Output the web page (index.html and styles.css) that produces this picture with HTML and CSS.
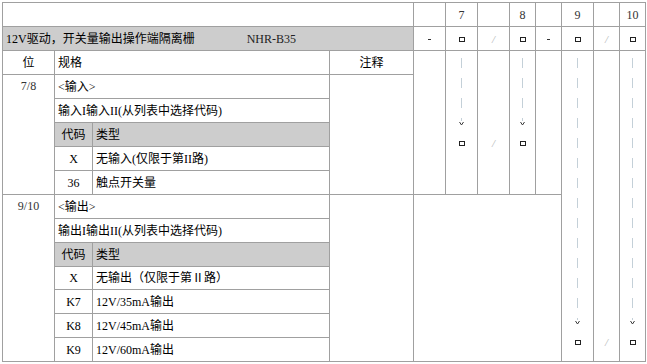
FILE: index.html
```html
<!DOCTYPE html>
<html lang="zh">
<head>
<meta charset="utf-8">
<title>NHR-B35</title>
<link rel="stylesheet" href="styles.css">
</head>
<body>
<table class="spec">
  <colgroup>
    <col class="w52"><col class="w38"><col class="w237"><col class="w84">
    <col class="w32"><col class="w32"><col class="w32"><col class="w26">
    <col class="w26"><col class="w32"><col class="w26"><col class="w26">
  </colgroup>
  <tr>
    <td colspan="4"></td>
    <td></td><td class="c num">7</td><td></td><td class="c num">8</td>
    <td></td><td class="c num">9</td><td></td><td class="c num">10</td>
  </tr>
  <tr>
    <td colspan="4" class="gray title"><span>12V驱动，开关量输出操作端隔离栅</span><span class="model">NHR-B35</span></td>
    <td class="c"><span class="minus"></span></td>
    <td class="c"><span class="box"></span></td>
    <td class="c slash">/</td>
    <td class="c"><span class="box"></span></td>
    <td class="c"><span class="minus"></span></td>
    <td class="c"><span class="box"></span></td>
    <td class="c slash">/</td>
    <td class="c"><span class="box"></span></td>
  </tr>
  <tr>
    <td class="c">位</td>
    <td colspan="2">规格</td>
    <td class="c">注释</td>
    <td rowspan="6"></td>
    <td rowspan="6" class="flow-cell">
      <div class="flow"><div class="dash dash-short"></div><svg class="arrow" width="5" height="5" viewBox="0 0 5 5"><path d="M0.5 1 L2.5 4 L4.5 1" fill="none" stroke="#3a3a3a" stroke-width="1"/></svg><span class="box box-flow-short"></span></div>
    </td>
    <td rowspan="6" class="c slash slash-short">/</td>
    <td rowspan="6" class="flow-cell">
      <div class="flow"><div class="dash dash-short"></div><svg class="arrow" width="5" height="5" viewBox="0 0 5 5"><path d="M0.5 1 L2.5 4 L4.5 1" fill="none" stroke="#3a3a3a" stroke-width="1"/></svg><span class="box box-flow-short"></span></div>
    </td>
    <td rowspan="6"></td>
    <td rowspan="13" class="flow-cell">
      <div class="flow"><div class="dash dash-long"></div><svg class="arrow" width="5" height="5" viewBox="0 0 5 5"><path d="M0.5 1 L2.5 4 L4.5 1" fill="none" stroke="#3a3a3a" stroke-width="1"/></svg><span class="box box-flow-long"></span></div>
    </td>
    <td rowspan="13" class="c slash slash-long">/</td>
    <td rowspan="13" class="flow-cell">
      <div class="flow"><div class="dash dash-long"></div><svg class="arrow" width="5" height="5" viewBox="0 0 5 5"><path d="M0.5 1 L2.5 4 L4.5 1" fill="none" stroke="#3a3a3a" stroke-width="1"/></svg><span class="box box-flow-long"></span></div>
    </td>
  </tr>
  <tr>
    <td rowspan="5" class="c top num">7/8</td>
    <td colspan="2">&lt;输入&gt;</td>
    <td rowspan="5"></td>
  </tr>
  <tr><td colspan="2">输入I输入II(从列表中选择代码)</td></tr>
  <tr><td class="c gray">代码</td><td class="gray">类型</td></tr>
  <tr><td class="c">X</td><td>无输入(仅限于第II路)</td></tr>
  <tr><td class="c">36</td><td>触点开关量</td></tr>
  <tr>
    <td rowspan="7" class="c top num">9/10</td>
    <td colspan="2">&lt;输出&gt;</td>
    <td rowspan="7"></td>
    <td rowspan="7" colspan="5"></td>
  </tr>
  <tr><td colspan="2">输出I输出II(从列表中选择代码)</td></tr>
  <tr><td class="c gray">代码</td><td class="gray">类型</td></tr>
  <tr class="short"><td class="c">X</td><td>无输出（仅限于第Ⅱ路）</td></tr>
  <tr><td class="c">K7</td><td>12V/35mA输出</td></tr>
  <tr><td class="c">K8</td><td>12V/45mA输出</td></tr>
  <tr><td class="c">K9</td><td>12V/60mA输出</td></tr>
</table>
</body>
</html>
```

FILE: styles.css
```css
html, body {
  margin: 0;
  padding: 0;
  background: #ffffff;
}

body {
  padding: 2px 0 0 2px;
}

.spec {
  border-collapse: collapse;
  table-layout: fixed;
  width: 644px;
  font-family: "Liberation Serif", "Noto Sans CJK SC", serif;
  font-size: 12px;
  line-height: 14px;
  color: #000;
}

.w52 { width: 52px; }
.w38 { width: 38px; }
.w237 { width: 237px; }
.w84 { width: 84px; }
.w32 { width: 32px; }
.w26 { width: 26px; }

.spec td {
  border: 1px solid #a0a0a0;
  height: 23px;
  padding: 0 3px;
  white-space: nowrap;
  overflow: hidden;
}

.spec tr.short td {
  height: 22px;
}

.c {
  text-align: center;
}

.gray {
  background: #cdcdcd;
}

.num {
  color: #333;
}

.top {
  vertical-align: top;
  padding-top: 4px !important;
}

.title .model {
  margin-left: 52px;
  color: #222;
}

.minus {
  display: inline-block;
  width: 3px;
  height: 1px;
  background: #333;
  vertical-align: middle;
}

.box {
  display: inline-block;
  width: 6px;
  height: 5px;
  border: 1px solid #222;
  box-sizing: border-box;
  vertical-align: middle;
}

.slash {
  color: #b4b4b4;
  font-size: 11px;
  font-style: italic;
}

.slash-short {
  vertical-align: top;
  padding-top: 85px !important;
}

.slash-long {
  vertical-align: top;
  padding-top: 284px !important;
}

.flow-cell {
  vertical-align: top;
  padding: 7px 0 0 !important;
}

.flow {
  display: flex;
  flex-direction: column;
  align-items: center;
}

.dash {
  width: 1px;
  background: repeating-linear-gradient(to bottom, #c4d0d8 0 10px, transparent 10px 20px);
}

.dash-short {
  height: 63px;
}

.dash-long {
  height: 262px;
}

.arrow {
  display: block;
}

.flow .box {
  display: block;
}

.box-flow-short {
  margin-top: 15px;
}

.box-flow-long {
  margin-top: 15px;
}
```
